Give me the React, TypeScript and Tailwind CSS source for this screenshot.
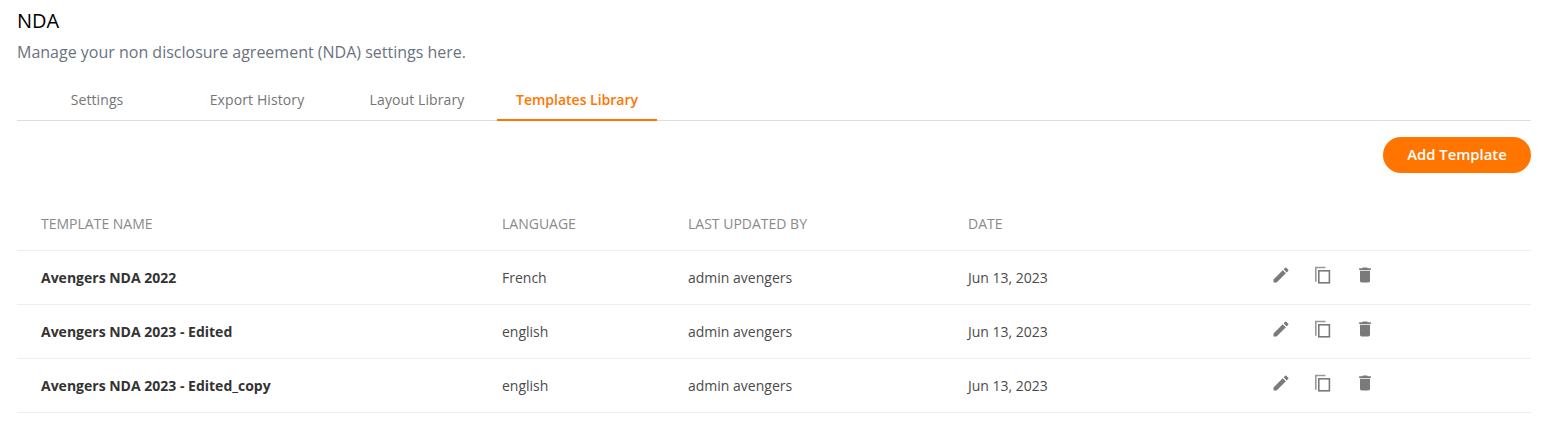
import { MdDelete, MdEdit } from "react-icons/md"

const rows = [
  { name: "Avengers NDA 2022", language: "French" },
  { name: "Avengers NDA 2023 - Edited", language: "english" },
  { name: "Avengers NDA 2023 - Edited_copy", language: "english" },
]

const tabs = ["Settings", "Export History", "Layout Library"]

function CopyIcon() {
  return (
    <svg width="20" height="20" viewBox="0 0 20 20" fill="none" strokeWidth="1.6">
      <path d="M2.8 16.7V2.5H12.5" stroke="#999999" />
      <rect x="5.8" y="5.8" width="10.6" height="12" stroke="#7a7a7a" />
    </svg>
  )
}

export default function App() {
  return (
    <div className="h-[441px] bg-white px-[17px] pr-[18px] pt-[9px] font-['Open_Sans',sans-serif]">
      <h1 className="text-[20px] leading-[24px] font-normal text-black">NDA</h1>
      <p className="mt-[7px] text-[16px] leading-[24px] text-[#6b7280]">
        Manage your non disclosure agreement (NDA) settings here.
      </p>

      {/* Tabs */}
      <div className="mt-[18px] flex h-[39px] border-b border-[#dedede]">
        {tabs.map((tab) => (
          <div key={tab} className="flex w-[160px] justify-center pt-[8px] text-[14px] leading-[20px] tracking-[0.1px] text-[#757575]">
            {tab}
          </div>
        ))}
        <div className="flex h-[39px] w-[160px] justify-center border-b-2 border-[#ff7500] pt-[8px] text-[14px] leading-[20px] font-semibold text-[#ff7500]">
          Templates Library
        </div>
      </div>

      <div className="mt-[16px] flex justify-end">
        <button className="h-[36px] w-[148px] rounded-full bg-[#ff7500] pb-[2px] text-[14.8px] font-semibold text-white">
          Add Template
        </button>
      </div>

      {/* Table */}
      <div className="mt-[26px] grid h-[52px] grid-cols-[461px_186px_280px_303px_1fr] items-center border-b border-[#eeeeee] pb-[3px] pl-[24px] text-[14px] text-[#8a8a8a]">
        <div>TEMPLATE NAME</div>
        <div>LANGUAGE</div>
        <div>LAST UPDATED BY</div>
        <div>DATE</div>
        <div />
      </div>
      {rows.map((row) => (
        <div
          key={row.name}
          className="grid h-[54px] grid-cols-[461px_186px_280px_303px_1fr] items-center border-b border-[#eeeeee] pl-[24px] text-[14px] text-[#4b4b4b]"
        >
          <div className="font-bold text-[#333333]">{row.name}</div>
          <div>{row.language}</div>
          <div>admin avengers</div>
          <div>Jun 13, 2023</div>
          <div className="-mt-[6px] flex gap-[22px] text-[#7a7a7a]">
            <MdEdit size={20} />
            <CopyIcon />
            <MdDelete size={20} />
          </div>
        </div>
      ))}
    </div>
  )
}
